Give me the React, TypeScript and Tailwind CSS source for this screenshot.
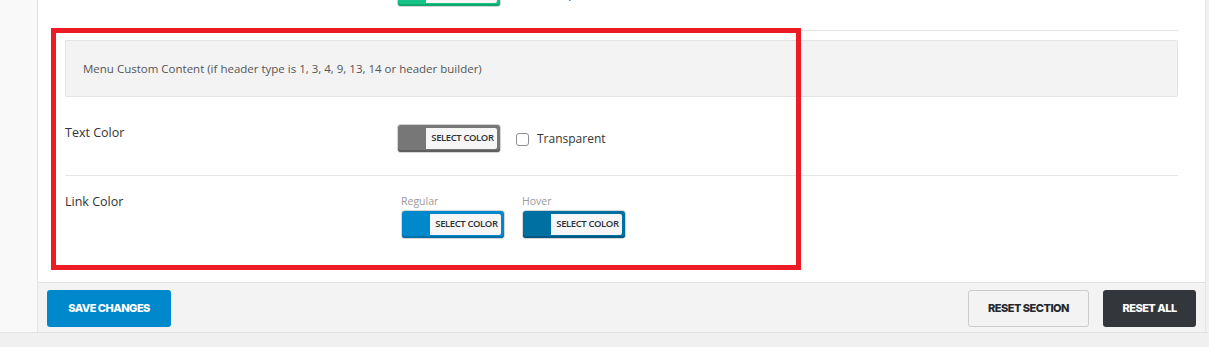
const body = { fontFamily: '"Open Sans", "Liberation Sans", sans-serif' }
const btnFont = { fontFamily: 'Inter, "Liberation Sans", sans-serif' }

function Picker({ color, edge }: { color: string; edge: string }) {
  return (
    <div
      className="flex h-[27px] w-[102px] shrink-0 rounded-[3px] pb-[3px] pl-[28px] pr-[3px] pt-[3px]"
      style={{ backgroundColor: color, boxShadow: `inset 0 -2px 0 ${edge}, 0 0 0 1px #d4d4d4` }}
    >
      <span className="flex flex-1 items-center justify-center rounded-r-[2px] bg-[#f6f6f6] pl-[2px] text-[9.5px] font-semibold tracking-[-0.4px] text-[#2c3338]">
        SELECT COLOR
      </span>
    </div>
  )
}

function Check({ label }: { label: string }) {
  return (
    <label className="flex items-center gap-[8px] text-[12px] text-[#333]">
      <span className="h-[13px] w-[13px] rounded-[3px] border border-[#8c8f94] bg-white" />
      {label}
    </label>
  )
}

export default function App() {
  return (
    <div className="relative flex h-[347px] w-full flex-col overflow-hidden bg-[#f0f0f0]" style={body}>
      <div className="flex h-[333px] border-b border-[#e2e2e2]">
        {/* left rail */}
        <div className="w-[38px] shrink-0 border-r border-[#e5e5e5] bg-[#f9f9f9]" />

        <div className="flex flex-1 flex-col">
          <div className="flex h-[282px] flex-col bg-white px-[27px]">
            {/* previous field, scrolled off */}
            <div className="flex h-[31px] shrink-0 items-end overflow-hidden border-b border-[#e5e5e5] pb-[24px]">
              <div className="w-[333px] shrink-0" />
              <div className="flex h-[27px] items-center gap-[16px]">
                <Picker color="#16c286" edge="#0fa86f" />
                <div className="mt-[2px]">
                  <Check label="Transparent" />
                </div>
              </div>
            </div>

            <div className="mt-[9px] flex h-[57px] shrink-0 items-center rounded-[2px] border border-[#e3e3e3] bg-[#f3f3f3] px-[17px] text-[11.5px] text-[#555]">
              Menu Custom Content (if header type is 1, 3, 4, 9, 13, 14 or header builder)
            </div>

            {/* text color */}
            <div className="flex h-[79px] shrink-0 border-b border-[#e5e5e5] pt-[27px]">
              <div className="w-[333px] shrink-0 text-[12.5px] leading-[18px] text-[#333]">Text Color</div>
              <div className="mt-[1px] flex h-[27px] items-center gap-[16px]">
                <Picker color="#777777" edge="#5e5e5e" />
                <div className="mt-[1px]">
                  <Check label="Transparent" />
                </div>
              </div>
            </div>

            {/* link color */}
            <div className="flex pt-[17px]">
              <div className="w-[337px] shrink-0 text-[12.5px] leading-[18px] text-[#333]">Link Color</div>
              <div className="flex gap-[19px] pt-[1px]">
                <div className="flex flex-col">
                  <span className="-ml-[1px] text-[10.5px] leading-[14px] text-[#999]">Regular</span>
                  <div className="mt-[3px]">
                    <Picker color="#0088cc" edge="#0070a8" />
                  </div>
                </div>
                <div className="flex flex-col">
                  <span className="-ml-[1px] text-[10.5px] leading-[14px] text-[#999]">Hover</span>
                  <div className="mt-[3px]">
                    <Picker color="#006fa1" edge="#005a84" />
                  </div>
                </div>
              </div>
            </div>
          </div>

          {/* footer */}
          <div className="flex flex-1 items-start justify-between border-t border-[#e2e2e2] bg-[#f3f3f3] px-[9px] pt-[7px]" style={btnFont}>
            <button className="h-[37px] w-[124px] rounded-[3px] bg-[#0088cc] text-[11px] font-extrabold tracking-[-0.5px] text-white">
              SAVE CHANGES
            </button>
            <div className="flex gap-[14px]">
              <button className="h-[37px] w-[121px] rounded-[3px] border border-[#cccccc] bg-[#f3f3f3] text-[11px] font-extrabold tracking-[-0.5px] text-[#23282d]">
                RESET SECTION
              </button>
              <button className="h-[37px] w-[93px] rounded-[3px] bg-[#33363b] text-[11px] font-extrabold tracking-[-0.5px] text-white">
                RESET ALL
              </button>
            </div>
          </div>
        </div>

        {/* right rail */}
        <div className="w-[4px] shrink-0 border-l border-[#e5e5e5] bg-[#f1f1f1]" />
      </div>

      {/* annotation */}
      <div className="pointer-events-none absolute left-[51px] top-[28px] h-[242px] w-[750px] border-[5px] border-[#ed1c24]" />
    </div>
  )
}
